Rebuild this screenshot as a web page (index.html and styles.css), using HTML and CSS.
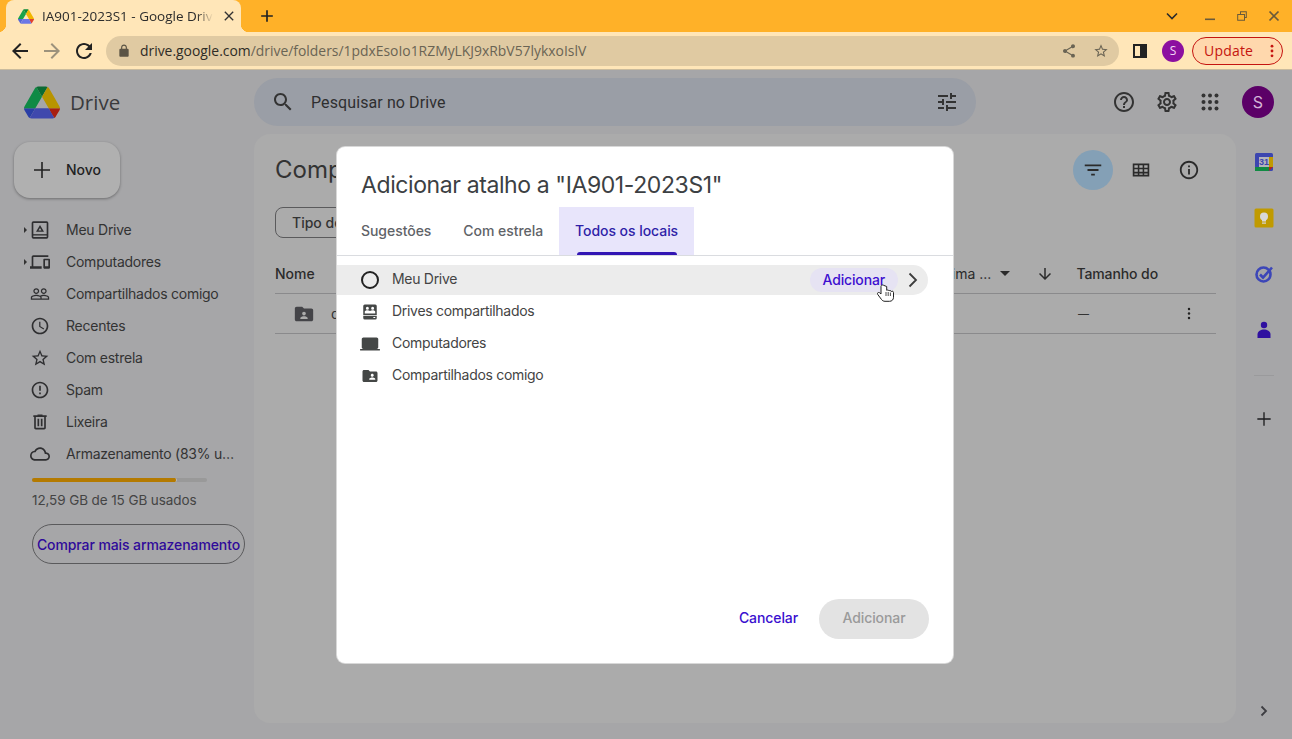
FILE: index.html
```html
<!DOCTYPE html>
<html lang="pt-BR">
<head>
  <meta charset="UTF-8">
  <title>IA901-2023S1 - Google Drive</title>
  <link rel="stylesheet" href="styles.css">
</head>
<body>
  <div class="chrome">
    <div class="tabstrip">
      <div class="tab">
        <svg class="favicon" viewBox="0 0 87.3 78"><path d="m6.6 66.85 3.85 6.65c.8 1.4 1.95 2.5 3.3 3.3l13.75-23.8h-27.5c0 1.55.4 3.1 1.2 4.5z" fill="#5566d8"/><path d="m43.65 25-13.75-23.8c-1.35.8-2.5 1.9-3.3 3.3l-25.4 44a9.06 9.06 0 0 0 -1.2 4.5h27.5z" fill="#1aa34a"/><path d="m73.55 76.8c1.35-.8 2.5-1.9 3.3-3.3l1.6-2.75 7.65-13.25c.8-1.4 1.2-2.95 1.2-4.5h-27.502l5.852 11.5z" fill="#e0402f"/><path d="m43.65 25 13.75-23.8c-1.35-.8-2.9-1.2-4.5-1.2h-18.5c-1.6 0-3.15.45-4.5 1.2z" fill="#0d8a38"/><path d="m59.8 53h-32.3l-13.75 23.8c1.35.8 2.9 1.2 4.5 1.2h50.8c1.6 0 3.15-.45 4.5-1.2z" fill="#6c78e6"/><path d="m73.4 26.5-12.7-22c-.8-1.4-1.95-2.5-3.3-3.3l-13.75 23.8 16.15 28h27.45c0-1.55-.4-3.1-1.2-4.5z" fill="#f2b600"/></svg>
        <span class="tab-title">IA901-2023S1 - Google Drive</span>
        <svg class="tab-close" viewBox="0 0 24 24"><path d="M19 6.41 17.59 5 12 10.59 6.41 5 5 6.41 10.59 12 5 17.59 6.41 19 12 13.41 17.59 19 19 17.59 13.41 12z"/></svg>
      </div>
      <svg class="new-tab" viewBox="0 0 24 24"><path d="M19 13h-6v6h-2v-6H5v-2h6V5h2v6h6v2z"/></svg>
      <div class="win-controls">
        <svg class="win-chevron" viewBox="0 0 12 8"><path d="M1 1.5 6 6.5 11 1.5" fill="none" stroke="#2b2b2b" stroke-width="1.6"/></svg>
        <svg class="win-btn" viewBox="0 0 12 12"><rect x="1" y="8.5" width="10" height="1.6" fill="#6a5a3a"/></svg>
        <svg class="win-btn" viewBox="0 0 12 12"><path d="M4 1.2h6.8V8H9V10.8H1.2V4H4zM5 2.2V4H9V7H9.8V2.2zM2.2 5V9.8H8V5z" fill="#6a5a3a"/></svg>
        <svg class="win-btn" viewBox="0 0 12 12"><path d="M1.5 1.5 10.5 10.5M10.5 1.5 1.5 10.5" stroke="#6a5a3a" stroke-width="1.7"/></svg>
      </div>
    </div>
    <div class="toolbar">
      <svg class="tool-icon" viewBox="0 0 24 24"><path d="M20 11H7.83l5.59-5.59L12 4l-8 8 8 8 1.41-1.41L7.83 13H20v-2z"/></svg>
      <svg class="tool-icon is-off" viewBox="0 0 24 24"><path d="M4 11h12.17l-5.59-5.59L12 4l8 8-8 8-1.41-1.41L16.17 13H4v-2z"/></svg>
      <svg class="tool-icon" viewBox="0 0 24 24"><path d="M17.65 6.35C16.2 4.9 14.21 4 12 4c-4.42 0-7.99 3.58-7.99 8s3.57 8 7.99 8c3.73 0 6.84-2.55 7.73-6h-2.08c-.82 2.33-3.04 4-5.65 4-3.31 0-6-2.69-6-6s2.69-6 6-6c1.66 0 3.14.69 4.22 1.78L13 11h7V4l-2.35 2.35z"/></svg>
      <div class="omnibox">
        <svg class="lock" viewBox="0 0 24 24"><path d="M18 8h-1V6c0-2.76-2.24-5-5-5S7 3.24 7 6v2H6c-1.1 0-2 .9-2 2v10c0 1.1.9 2 2 2h12c1.1 0 2-.9 2-2V10c0-1.1-.9-2-2-2zM9 6c0-1.66 1.34-3 3-3s3 1.34 3 3v2H9V6z"/></svg>
        <span class="url"><b>drive.google.com</b>/drive/folders/1pdxEsoIo1RZMyLKJ9xRbV57lykxoIslV</span>
        <svg class="omni-icon" viewBox="0 0 24 24"><path d="M18 16.08c-.76 0-1.44.3-1.96.77L8.91 12.7c.05-.23.09-.46.09-.7s-.04-.47-.09-.7l7.05-4.11c.54.5 1.25.81 2.04.81 1.66 0 3-1.34 3-3s-1.34-3-3-3-3 1.34-3 3c0 .24.04.47.09.7L8.04 9.81C7.5 9.31 6.79 9 6 9c-1.66 0-3 1.34-3 3s1.34 3 3 3c.79 0 1.5-.31 2.04-.81l7.12 4.16c-.05.21-.08.43-.08.65 0 1.61 1.31 2.92 2.92 2.92s2.92-1.31 2.92-2.92-1.31-2.92-2.92-2.92z"/></svg>
        <svg class="omni-icon" viewBox="0 0 24 24"><path d="M22 9.24l-7.19-.62L12 2 9.19 8.63 2 9.24l5.46 4.73L5.82 21 12 17.27 18.18 21l-1.63-7.03L22 9.24zM12 15.4l-3.76 2.27 1-4.28-3.32-2.88 4.38-.38L12 6.1l1.71 4.04 4.38.38-3.32 2.88 1 4.28L12 15.4z"/></svg>
      </div>
      <div class="side-panel"><span></span></div>
      <div class="profile">S</div>
      <div class="update">Update
        <svg class="update-dots" viewBox="0 0 4 16"><circle cx="2" cy="2.5" r="1.6"/><circle cx="2" cy="8" r="1.6"/><circle cx="2" cy="13.5" r="1.6"/></svg>
      </div>
    </div>
  </div>

  <div class="app">
    <header class="topbar">
      <div class="brand">
        <svg class="logo" viewBox="0 0 87.3 78"><path d="m6.6 66.85 3.85 6.65c.8 1.4 1.95 2.5 3.3 3.3l13.75-23.8h-27.5c0 1.55.4 3.1 1.2 4.5z" fill="#2b3fa6"/><path d="m43.65 25-13.75-23.8c-1.35.8-2.5 1.9-3.3 3.3l-25.4 44a9.06 9.06 0 0 0 -1.2 4.5h27.5z" fill="#0f8a45"/><path d="m73.55 76.8c1.35-.8 2.5-1.9 3.3-3.3l1.6-2.75 7.65-13.25c.8-1.4 1.2-2.95 1.2-4.5h-27.502l5.852 11.5z" fill="#a81f12"/><path d="m43.65 25 13.75-23.8c-1.35-.8-2.9-1.2-4.5-1.2h-18.5c-1.6 0-3.15.45-4.5 1.2z" fill="#0b6b33"/><path d="m59.8 53h-32.3l-13.75 23.8c1.35.8 2.9 1.2 4.5 1.2h50.8c1.6 0 3.15-.45 4.5-1.2z" fill="#3f48ad"/><path d="m73.4 26.5-12.7-22c-.8-1.4-1.95-2.5-3.3-3.3l-13.75 23.8 16.15 28h27.45c0-1.55-.4-3.1-1.2-4.5z" fill="#b89400"/></svg>
        <span class="brand-name">Drive</span>
      </div>
      <div class="search">
        <svg class="icon" viewBox="0 0 24 24"><path d="M15.5 14h-.79l-.28-.27C15.41 12.59 16 11.11 16 9.5 16 5.91 13.09 3 9.5 3S3 5.91 3 9.5 5.91 16 9.5 16c1.61 0 3.09-.59 4.23-1.57l.27.28v.79l5 4.99L20.49 19l-4.99-5zm-6 0C7.01 14 5 11.99 5 9.5S7.01 5 9.5 5 14 7.01 14 9.5 11.99 14 9.5 14z"/></svg>
        <span class="search-text">Pesquisar no Drive</span>
        <svg class="icon" viewBox="0 0 24 24"><path d="M3 17v2h6v-2H3zM3 5v2h10V5H3zm10 16v-2h8v-2h-8v-2h-2v6h2zM7 9v2H3v2h4v2h2V9H7zm14 4v-2H11v2h10zm-6-4h2V7h4V5h-4V3h-2v6z"/></svg>
      </div>
      <div class="top-actions">
        <svg class="icon" viewBox="0 0 24 24"><path d="M11 18h2v-2h-2v2zm1-16C6.48 2 2 6.48 2 12s4.48 10 10 10 10-4.48 10-10S17.52 2 12 2zm0 18c-4.41 0-8-3.59-8-8s3.59-8 8-8 8 3.59 8 8-3.59 8-8 8zm0-14c-2.21 0-4 1.79-4 4h2c0-1.1.9-2 2-2s2 .9 2 2c0 2-3 1.75-3 5h2c0-2.25 3-2.5 3-5 0-2.21-1.79-4-4-4z"/></svg>
        <svg class="icon" viewBox="0 0 24 24"><path d="M19.43 12.98c.04-.32.07-.64.07-.98 0-.34-.03-.66-.07-.98l2.11-1.65c.19-.15.24-.42.12-.64l-2-3.46c-.09-.16-.26-.25-.44-.25-.06 0-.12.01-.17.03l-2.49 1c-.52-.4-1.08-.73-1.69-.98l-.38-2.65C14.46 2.18 14.25 2 14 2h-4c-.25 0-.46.18-.49.42l-.38 2.65c-.61.25-1.17.59-1.69.98l-2.49-1c-.06-.02-.12-.03-.18-.03-.17 0-.34.09-.43.25l-2 3.46c-.13.22-.07.49.12.64l2.11 1.65c-.04.32-.07.65-.07.98 0 .33.03.66.07.98l-2.11 1.65c-.19.15-.24.42-.12.64l2 3.46c.09.16.26.25.44.25.06 0 .12-.01.17-.03l2.49-1c.52.4 1.08.73 1.69.98l.38 2.65c.03.24.24.42.49.42h4c.25 0 .46-.18.49-.42l.38-2.65c.61-.25 1.17-.59 1.69-.98l2.49 1c.06.02.12.03.18.03.17 0 .34-.09.43-.25l2-3.46c.12-.22.07-.49-.12-.64l-2.11-1.65zm-1.98-1.71c.04.31.05.52.05.73 0 .21-.02.43-.05.73l-.14 1.13.89.7 1.08.84-.7 1.21-1.27-.51-1.04-.42-.9.68c-.43.32-.84.56-1.25.73l-1.06.43-.16 1.13-.2 1.35h-1.4l-.19-1.35-.16-1.13-1.06-.43c-.43-.18-.83-.41-1.23-.71l-.91-.7-1.06.43-1.27.51-.7-1.21 1.08-.84.89-.7-.14-1.13c-.03-.31-.05-.54-.05-.74s.02-.43.05-.73l.14-1.13-.89-.7-1.08-.84.7-1.21 1.27.51 1.04.42.9-.68c.43-.32.84-.56 1.25-.73l1.06-.43.16-1.13.2-1.35h1.39l.19 1.35.16 1.13 1.06.43c.43.18.83.41 1.23.71l.91.7 1.06-.43 1.27-.51.7 1.21-1.07.85-.89.7.14 1.13zM12 8c-2.21 0-4 1.79-4 4s1.79 4 4 4 4-1.79 4-4-1.79-4-4-4zm0 6c-1.1 0-2-.9-2-2s.9-2 2-2 2 .9 2 2-.9 2-2 2z"/></svg>
        <svg class="icon" viewBox="0 0 24 24"><circle cx="5.5" cy="5.5" r="2"/><circle cx="12" cy="5.5" r="2"/><circle cx="18.5" cy="5.5" r="2"/><circle cx="5.5" cy="12" r="2"/><circle cx="12" cy="12" r="2"/><circle cx="18.5" cy="12" r="2"/><circle cx="5.5" cy="18.5" r="2"/><circle cx="12" cy="18.5" r="2"/><circle cx="18.5" cy="18.5" r="2"/></svg>
        <div class="avatar">S</div>
      </div>
    </header>

    <div class="workspace">
      <nav class="sidebar">
        <button class="new-btn">
          <svg class="new-plus" viewBox="0 0 24 24"><path d="M20 12.8h-7.2V20h-1.6v-7.2H4v-1.600h7.2V4h1.600v7.200H20z"/></svg>
          Novo
        </button>
        <ul class="nav">
          <li class="nav-item has-caret">
            <svg class="nav-icon" viewBox="0 0 24 24"><rect x="3" y="2.500" width="18" height="19" rx="1" fill="none" stroke="currentColor" stroke-width="2"/><path d="M3 17.800h18" stroke="currentColor" stroke-width="1.600"/><path d="M12 6l4.800 8H7.200zM12 9.500l-1.800 3h3.600z" fill-rule="evenodd"/></svg>
            Meu Drive
          </li>
          <li class="nav-item has-caret">
            <svg class="nav-icon" viewBox="0 0 24 24"><path d="M4 6h18V4H4c-1.100 0-2 .9-2 2v11H0v3h14v-3H4V6zm19 2h-6c-.55 0-1 .45-1 1v10c0 .55.45 1 1 1h6c.55 0 1-.45 1-1V9c0-.55-.45-1-1-1zm-1 9h-4v-7h4v7z"/></svg>
            Computadores
          </li>
          <li class="nav-item">
            <svg class="nav-icon" viewBox="0 0 24 24"><path d="M16.500 13c-1.200 0-3.070.34-4.500 1-1.430-.67-3.300-1-4.500-1C5.330 13 1 14.080 1 16.250V19h22v-2.750c0-2.170-4.330-3.250-6.500-3.250zm-4 4.500h-10v-1.250c0-.54 2.560-1.750 5-1.750s5 1.210 5 1.750v1.250zm9 0H14v-1.250c0-.46-.2-.86-.52-1.220.88-.3 1.960-.53 3.020-.53 2.440 0 5 1.210 5 1.750v1.250zM7.500 12c1.930 0 3.500-1.570 3.500-3.500S9.430 5 7.500 5 4 6.570 4 8.500 5.570 12 7.500 12zm0-5.500c1.100 0 2 .9 2 2s-.9 2-2 2-2-.9-2-2 .9-2 2-2zm9 5.500c1.930 0 3.500-1.570 3.500-3.500S18.430 5 16.500 5 13 6.570 13 8.500s1.570 3.500 3.500 3.500zm0-5.500c1.100 0 2 .9 2 2s-.9 2-2 2-2-.9-2-2 .9-2 2-2z"/></svg>
            Compartilhados comigo
          </li>
          <li class="nav-item">
            <svg class="nav-icon" viewBox="0 0 24 24"><path d="M11.990 2C6.470 2 2 6.480 2 12s4.470 10 9.990 10C17.520 22 22 17.520 22 12S17.520 2 11.990 2zM12 20c-4.420 0-8-3.580-8-8s3.580-8 8-8 8 3.580 8 8-3.580 8-8 8zm.5-13H11v6l5.250 3.150.75-1.230-4.500-2.670z"/></svg>
            Recentes
          </li>
          <li class="nav-item">
            <svg class="nav-icon" viewBox="0 0 24 24"><path d="M22 9.240l-7.190-.62L12 2 9.190 8.630 2 9.240l5.460 4.730L5.820 21 12 17.270 18.180 21l-1.630-7.030L22 9.240zM12 15.400l-3.760 2.270 1-4.280-3.320-2.880 4.380-.38L12 6.100l1.710 4.040 4.380.38-3.320 2.880 1 4.280L12 15.400z"/></svg>
            Com estrela
          </li>
          <li class="nav-item">
            <svg class="nav-icon" viewBox="0 0 24 24"><path d="M11 15h2v2h-2zm0-8h2v6h-2zm.99-5C6.470 2 2 6.480 2 12s4.470 10 9.990 10C17.520 22 22 17.520 22 12S17.520 2 11.990 2zM12 20c-4.420 0-8-3.580-8-8s3.580-8 8-8 8 3.580 8 8-3.580 8-8 8z"/></svg>
            Spam
          </li>
          <li class="nav-item">
            <svg class="nav-icon" viewBox="0 0 24 24"><path d="M15 4V3H9v1H4v2h1v13c0 1.100.9 2 2 2h10c1.100 0 2-.9 2-2V6h1V4h-5zm2 15H7V6h10v13zM9 8h2v9H9zm4 0h2v9h-2z"/></svg>
            Lixeira
          </li>
          <li class="nav-item">
            <svg class="nav-icon" viewBox="0 0 24 24"><path d="M19.350 10.040C18.670 6.590 15.640 4 12 4 9.110 4 6.600 5.640 5.350 8.040 2.340 8.360 0 10.910 0 14c0 3.310 2.690 6 6 6h13c2.760 0 5-2.240 5-5 0-2.640-2.050-4.780-4.650-4.960zM19 18H6c-2.210 0-4-1.790-4-4 0-2.050 1.530-3.760 3.560-3.970l1.070-.11.5-.95C8.080 7.140 9.940 6 12 6c2.620 0 4.880 1.860 5.390 4.430l.3 1.500 1.530.11c1.560.1 2.780 1.410 2.780 2.960 0 1.650-1.350 3-3 3z"/></svg>
            <span class="nav-trunc">Armazenamento (83% usado)</span>
          </li>
        </ul>
        <div class="storage">
          <div class="storage-bar"><div class="storage-fill" style="width: 83%"></div></div>
          <div class="storage-text">12,59 GB de 15 GB usados</div>
          <div class="buy-btn">Comprar mais armazenamento</div>
        </div>
      </nav>

      <main class="main">
        <div class="main-head">
          <h1 class="main-title">Compartilhados comigo</h1>
          <div class="view-actions">
            <span class="view-btn is-active"><svg class="icon-sm" viewBox="0 0 24 24"><path d="M10 18h4v-2h-4v2zM3 6v2h18V6H3zm3 7h12v-2H6v2z"/></svg></span>
            <span class="view-btn"><svg class="icon-sm" viewBox="0 0 24 24"><path d="M3 5h18v14H3zM4.800 6.800v2.800h3.700V6.800zm5.400 0v2.800h3.600V6.800zm5.300 0v2.800h3.700V6.800zM4.800 11.300v2.700h3.700v-2.700zm5.400 0v2.700h3.600v-2.700zm5.300 0v2.700h3.700v-2.700zM4.800 15.700v1.500h3.700v-1.500zm5.400 0v1.500h3.600v-1.500zm5.300 0v1.500h3.700v-1.500z" fill-rule="evenodd"/></svg></span>
            <span class="view-btn"><svg class="icon-sm" viewBox="0 0 24 24"><path d="M11 7h2v2h-2zm0 4h2v6h-2zm1-9C6.480 2 2 6.480 2 12s4.480 10 10 10 10-4.480 10-10S17.520 2 12 2zm0 18c-4.410 0-8-3.590-8-8s3.590-8 8-8 8 3.590 8 8-3.590 8-8 8z"/></svg></span>
          </div>
        </div>
        <div class="chips"><span class="chip">Tipo de item</span></div>
        <div class="list-head">
          <span class="col-name">Nome</span>
          <span class="col-date">Data da última ...</span>
          <svg class="head-caret" viewBox="0 0 10 5"><path d="M0 0h10L5 5z"/></svg>
          <svg class="head-arrow" viewBox="0 0 24 24"><path d="M20 12l-1.410-1.410L13 16.170V4h-2v12.170l-5.580-5.590L4 12l8 8 8-8z"/></svg>
          <span class="col-size">Tamanho do</span>
        </div>
        <div class="list-row">
          <svg class="row-folder" viewBox="0 0 24 24"><path d="M20 6h-8l-2-2H4c-1.100 0-1.990.9-1.990 2L2 18c0 1.100.9 2 2 2h16c1.100 0 2-.9 2-2V8c0-1.100-.9-2-2-2zm-8 3.500c1.100 0 2 .9 2 2s-.9 2-2 2-2-.9-2-2 .9-2 2-2zm4 8H8v-1c0-1.330 2.670-2 4-2s4 .67 4 2v1z"/></svg>
          <span class="row-name">dados</span>
          <span class="row-size">—</span>
          <svg class="row-more" viewBox="0 0 4 16"><circle cx="2" cy="2.500" r="1.500"/><circle cx="2" cy="8" r="1.500"/><circle cx="2" cy="13.500" r="1.500"/></svg>
        </div>
      </main>

      <aside class="rail">
        <svg class="rail-icon" viewBox="0 0 20 20"><rect x="1" y="1" width="18" height="18" rx="1.500" fill="#3c46b0"/><rect x="1" y="15" width="14" height="4" fill="#118a43"/><rect x="15" y="5" width="4" height="10" fill="#c09a00"/><path d="M15 15h4l-4 4z" fill="#b3231a"/><rect x="5" y="5" width="10" height="10" fill="#b4b4bc"/><text class="cal-day" x="10" y="13.400" text-anchor="middle">31</text></svg>
        <svg class="rail-icon" viewBox="0 0 20 20"><rect x="0.500" y="0.500" width="19" height="19" rx="1.500" fill="#c09a00"/><circle cx="10" cy="8.500" r="4" fill="#d8d8d8"/><rect x="8" y="11" width="4" height="2.500" fill="#d8d8d8"/><rect x="8" y="14.500" width="4" height="1.200" fill="#d8d8d8"/></svg>
        <svg class="rail-icon" viewBox="0 0 20 20"><circle cx="9.500" cy="10.500" r="7" fill="none" stroke="#3c46b8" stroke-width="2.600"/><path d="M6 10.500l3 3 9-10" fill="none" stroke="#3c46b8" stroke-width="2.600"/></svg>
        <svg class="rail-icon" viewBox="0 0 20 20"><circle cx="10" cy="5" r="3.200" fill="#2f10a0"/><path d="M3.500 18v-3.500C3.500 11 7 9.500 10 9.500s6.500 1.500 6.500 5V18z" fill="#2f10a0"/></svg>
        <div class="rail-divider"></div>
        <svg class="rail-plus" viewBox="0 0 24 24"><path d="M20 12.800h-7.200V20h-1.600v-7.200H4v-1.600h7.200V4h1.600v7.200H20z"/></svg>
        <svg class="rail-expand" viewBox="0 0 8 12"><path d="M1.500 1.500 6 6 1.500 10.500" fill="none" stroke="#3d3d42" stroke-width="1.800"/></svg>
      </aside>
    </div>
  </div>

  <div class="dialog">
    <h2 class="dialog-title">Adicionar atalho a "IA901-2023S1"</h2>
    <div class="dialog-tabs">
      <span class="dialog-tab">Sugestões</span>
      <span class="dialog-tab">Com estrela</span>
      <span class="dialog-tab is-selected">Todos os locais</span>
    </div>
    <div class="places">
      <div class="place is-hover">
        <span class="radio"></span>
        <span class="place-name">Meu Drive</span>
        <span class="place-add">Adicionar</span>
        <svg class="place-next" viewBox="0 0 10 16"><path d="M1.500 1.500 8 8 1.500 14.500" fill="none" stroke="#3c3c3c" stroke-width="1.800"/></svg>
      </div>
      <div class="place">
        <svg class="place-icon" viewBox="0 0 24 24"><path d="M5 2h14a2 2 0 0 1 2 2v12H3V4a2 2 0 0 1 2-2zm3.500 3a2 2 0 1 0 0 4 2 2 0 0 0 0-4zm7 0a2 2 0 1 0 0 4 2 2 0 0 0 0-4zM5 14h14v-2.500c0-1-2-1.800-3.500-1.800-1.300 0-2.700.4-3.500 1-.8-.6-2.200-1-3.500-1-1.500 0-3.500.8-3.500 1.800z" fill-rule="evenodd"/><path d="M3 17h18v3a2 2 0 0 1-2 2H5a2 2 0 0 1-2-2zm13.500 1.500V20h2.500v-1.500z" fill-rule="evenodd"/></svg>
        <span class="place-name">Drives compartilhados</span>
      </div>
      <div class="place">
        <svg class="place-icon is-wide" viewBox="0 0 24 24"><path d="M20 18c1.100 0 1.990-.9 1.990-2L22 6c0-1.100-.9-2-2-2H4c-1.100 0-2 .9-2 2v10c0 1.100.9 2 2 2H0v2h24v-2h-4z"/></svg>
        <span class="place-name">Computadores</span>
      </div>
      <div class="place">
        <svg class="place-icon" viewBox="0 0 24 24"><path d="M20 6h-8l-2-2H4c-1.100 0-1.990.9-1.990 2L2 18c0 1.100.9 2 2 2h16c1.100 0 2-.9 2-2V8c0-1.100-.9-2-2-2zm-5 3c1.100 0 2 .9 2 2s-.9 2-2 2-2-.9-2-2 .9-2 2-2zm4 8h-8v-1c0-1.330 2.670-2 4-2s4 .67 4 2v1z"/></svg>
        <span class="place-name">Compartilhados comigo</span>
      </div>
    </div>
    <div class="dialog-foot">
      <span class="cancel">Cancelar</span>
      <span class="confirm">Adicionar</span>
    </div>
  </div>

  <svg class="cursor-hand" viewBox="0 0 18 18"><path d="M5.500 1c-.9 0-1.500.6-1.500 1.500V10L2.800 8.900c-.8-.7-2-.5-2.300.3-.2.5 0 1 .4 1.500L4.500 15.500c.8 1 1.800 1.800 3.500 1.800h4.500c2.500 0 4-1.700 4-4V8.500c0-.8-.6-1.300-1.300-1.300-.4 0-.7.1-.9.3-.2-.7-.8-1-1.300-1-.4 0-.8.1-1 .4-.2-.6-.7-.9-1.300-.9-.4 0-.7.1-1 .3V2.500C7 1.600 6.400 1 5.500 1z" fill="#fff" stroke="#222" stroke-width="1"/><path d="M9 8v4M11.200 8v4M13.400 8.500V12" stroke="#222" stroke-width=".8" fill="none"/></svg>
</body>
</html>
```

FILE: styles.css
```css
* { box-sizing: border-box; }
html, body { height: 100%; }
body { margin: 0; width: 1292px; height: 739px; overflow: hidden; position: relative; font-family: Inter, Roboto, sans-serif; font-size: 14px; color: #333; background: #a6a6a8; }
svg { display: block; flex: none; fill: currentColor; }

/* browser frame */
.chrome { height: 70px; background: #ffe6b8; border-bottom: 1px solid #c9bb9e; font-family: "Open Sans", "Noto Sans", sans-serif; }
.tabstrip { height: 32px; background: #ffb128; display: flex; align-items: center; padding-left: 6px; }
.tab { width: 235px; height: 32px; background: #ffe6b8; border-radius: 8px 8px 0 0; display: flex; align-items: center; padding: 0 4px 0 12px; gap: 8px; position: relative; }
.tab::before, .tab::after { content: ""; position: absolute; bottom: 0; width: 8px; height: 8px; }
.tab::before { left: -8px; background: radial-gradient(circle at 0 0, #ffb128 8px, #ffe6b8 8.500px); }
.tab::after { right: -8px; background: radial-gradient(circle at 100% 0, #ffb128 8px, #ffe6b8 8.500px); }
.favicon { width: 16px; height: 15px; }
.tab-title { flex: 1; overflow: hidden; white-space: nowrap; font-size: 13.500px; color: #2b2b2b; -webkit-mask-image: linear-gradient(to left, transparent 0, #000 16px); mask-image: linear-gradient(to left, transparent 0, #000 16px); }
.tab-close { width: 16px; height: 16px; color: #333; }
.new-tab { width: 20px; height: 20px; margin-left: 16px; color: #222; }
.win-controls { margin-left: auto; display: flex; align-items: center; padding-right: 12px; gap: 20px; }
.win-chevron { width: 12px; height: 8px; margin-right: 6px; }
.win-btn { width: 12px; height: 12px; }

.toolbar { height: 37px; display: flex; align-items: center; padding-left: 8px; }
.tool-icon { width: 24px; height: 24px; color: #222; margin-right: 8px; }
.tool-icon.is-off { color: #9c927c; }
.omnibox { width: 1013px; height: 30px; margin-left: 2px; background: #e0caa2; border-radius: 15px; display: flex; align-items: center; padding: 0 10px 0 11px; }
.lock { width: 14px; height: 14px; color: #5b5445; }
.url { flex: 1; margin-left: 9px; font-size: 13.900px; color: #6a6454; white-space: nowrap; }
.url b { font-weight: 400; color: #2e2c26; }
.omni-icon { width: 16px; height: 16px; color: #6a6454; margin-left: 16px; }
.side-panel { width: 14px; height: 14px; margin-left: 14px; border: 2px solid #222; display: flex; justify-content: flex-end; }
.side-panel span { width: 5px; background: #222; }
.profile { width: 22px; height: 22px; margin-left: 15px; background: #8c0fa0; color: #f3d9f7; border-radius: 50%; font-size: 12px; display: flex; align-items: center; justify-content: center; }
.update { width: 91px; height: 28px; margin-left: 8px; border: 1px solid #c5140f; border-radius: 14px; background: #ffd8ad; color: #c5140f; font-size: 14px; letter-spacing: .2px; display: flex; align-items: center; justify-content: space-between; padding: 0 8px 0 11px; }
.update-dots { width: 4px; height: 14px; }

/* drive page, already dimmed by the dialog scrim */
.app { height: 669px; display: flex; flex-direction: column; }
.topbar { height: 64px; display: flex; align-items: center; padding: 0 18px 0 24px; flex: none; }
.brand { width: 230px; display: flex; align-items: center; gap: 10px; }
.logo { width: 36px; height: 33px; }
.brand-name { font-size: 20.500px; color: #3a3a3c; font-family: "Open Sans", sans-serif; }
.search { width: 722px; height: 48px; background: #9a9ea6; border-radius: 24px; display: flex; align-items: center; padding: 0 17px; }
.icon { width: 24px; height: 24px; color: #333; }
.search-text { flex: 1; margin-left: 16px; font-size: 16px; letter-spacing: .1px; color: #2f2f30; font-family: Roboto, sans-serif; }
.top-actions { margin-left: auto; display: flex; align-items: center; gap: 19px; }
.avatar { width: 32px; height: 32px; margin-left: 1px; border-radius: 50%; background: #5b0067; color: #d4b4d8; font-size: 16px; display: flex; align-items: center; justify-content: center; }

.workspace { flex: 1; display: flex; min-height: 0; }
.sidebar { width: 254px; flex: none; padding: 8px 0 0 14px; }
.new-btn { width: 106px; height: 56px; border: 0; border-radius: 16px; background: #b0b0b0; box-shadow: 0 1px 3px rgba(0,0,0,.35); font: 500 14px Inter, Roboto, sans-serif; color: #222; display: flex; align-items: center; padding: 0 0 2px 16px; gap: 12px; }
.new-plus { width: 24px; height: 24px; margin-top: 2px; }
.nav { list-style: none; margin: 16px 0 0; padding: 0; }
.nav-item { height: 32px; width: 222px; display: flex; align-items: center; padding: 0 0 2px 16px; gap: 16px; color: #333; position: relative; white-space: nowrap; font-size: 14px; letter-spacing: -.25px; }
.nav-icon { width: 20px; height: 20px; margin-top: 2px; color: #2f2f31; }
.has-caret::before { content: ""; position: absolute; left: 10px; top: 13px; border-left: 3px solid #333; border-top: 3px solid transparent; border-bottom: 3px solid transparent; }
.nav-trunc { width: 172px; overflow: hidden; text-overflow: ellipsis; }
.storage { padding: 8px 0 0 18px; }
.storage-bar { width: 175px; height: 4px; border-radius: 2px; background: #999; }
.storage-fill { height: 4px; border-radius: 2px; background: #b47a00; border-right: 1px solid #bbb; }
.storage-text { margin-top: 10px; font-size: 13.500px; color: #444; letter-spacing: -.1px; }
.buy-btn { width: 213px; height: 40px; margin-top: 16px; border: 1px solid #5a5a5c; border-radius: 20px; display: flex; align-items: center; justify-content: center; color: #2f0a9a; font-weight: 500; font-size: 14px; white-space: nowrap; letter-spacing: -.1px; }

.main { width: 982px; flex: none; height: 589px; background: #ababab; border-radius: 16px; padding: 0 20px 0 21px; overflow: hidden; }
.main-head { height: 72px; display: flex; align-items: center; justify-content: space-between; }
.main-title { margin: 0 0 2px; font-size: 24px; font-weight: 400; color: #333; white-space: nowrap; }
.view-actions { display: flex; align-items: center; gap: 8px; margin-right: 7px; }
.view-btn { width: 40px; height: 40px; border-radius: 50%; display: flex; align-items: center; justify-content: center; color: #2b2b2b; }
.view-btn.is-active { background: #84a0b6; }
.icon-sm { width: 22px; height: 22px; }
.chips { height: 31px; margin-top: 1px; }
.chip { display: inline-block; height: 31px; line-height: 29px; padding: 0 16px; border: 1px solid #5a5a5c; border-radius: 8px; font-weight: 500; color: #333; }
.list-head { height: 40px; margin-top: 16px; display: flex; align-items: center; border-bottom: 1px solid #8a8a8c; font-weight: 500; color: #2b2b2b; padding-right: 58px; }
.col-name { flex: 1; }
.col-date { white-space: nowrap; font-weight: 400; }
.head-caret { width: 10px; height: 5px; margin-left: 9px; }
.head-arrow { width: 18px; height: 18px; margin-left: 26px; }
.col-size { margin-left: 22px; white-space: nowrap; letter-spacing: -.1px; }
.list-row { height: 40px; display: flex; align-items: center; border-bottom: 1px solid #8a8a8c; position: relative; }
.row-folder { width: 22px; height: 22px; margin-left: 18px; color: #444448; }
.row-name { margin-left: 16px; }
.row-size { position: absolute; left: 803px; color: #333; font-size: 11px; }
.row-more { position: absolute; right: 25px; top: 13px; width: 4px; height: 13px; color: #222; }

.rail { flex: 1; display: flex; flex-direction: column; align-items: center; padding-top: 18px; position: relative; }
.rail-icon { width: 20px; height: 20px; margin-bottom: 36px; }
.cal-day { font: 700 9px "Liberation Sans", sans-serif; fill: #3c46b0; }
.rail-divider { width: 20px; height: 1px; background: #9a9a9c; margin-top: -1px; }
.rail-plus { width: 20px; height: 20px; margin-top: 33px; color: #1d1d1f; }
.rail-expand { position: absolute; left: 24px; top: 571px; width: 8px; height: 12px; }

/* dialog */
.dialog { position: absolute; left: 337px; top: 147px; width: 616px; height: 516px; background: #fff; border-radius: 8px; box-shadow: 0 0 0 1px #d8d8d8; display: flex; flex-direction: column; }
.dialog-title { margin: 0; padding: 24px 24px 0; height: 60px; font-size: 23px; font-weight: 400; color: #3c4043; white-space: nowrap; letter-spacing: -.4px; }
.dialog-tabs { height: 49px; display: flex; border-bottom: 1px solid #dadce0; padding-left: 8px; flex: none; }
.dialog-tab { height: 48px; padding: 0 16px 2px; display: flex; align-items: center; color: #5f6368; font-weight: 500; font-size: 14px; letter-spacing: -.05px; }
.dialog-tab.is-selected { background: #e8e5fb; color: #2f1fa8; position: relative; }
.dialog-tab.is-selected::after { content: ""; position: absolute; left: 18px; right: 17px; bottom: 0; height: 3px; background: #3215b4; border-radius: 3px 3px 0 0; }
.places { padding-top: 9px; flex: 1; }
.place { width: 591px; height: 30px; margin-bottom: 2px; display: flex; align-items: center; padding-left: 24px; color: #444; font-size: 14px; }
.place.is-hover { background: #ececec; border-radius: 0 15px 15px 0; }
.radio { width: 18px; height: 18px; border: 2px solid #222; border-radius: 50%; flex: none; }
.place-icon { width: 18px; height: 18px; color: #444746; }
.place-icon.is-wide { transform: scale(1.100); }
.place-name { margin-left: 13px; padding-bottom: 4px; letter-spacing: -.3px; }
.place-add { margin-left: auto; height: 24px; padding: 0 13px 2px; border-radius: 12px; background: #e6e3f3; color: #3d0fd0; font-weight: 500; letter-spacing: -.15px; display: flex; align-items: center; }
.place-next { width: 10px; height: 16px; margin: 0 10px 0 10px; }
.dialog-foot { height: 64px; padding: 0 24px 24px 0; display: flex; align-items: center; justify-content: flex-end; flex: none; }
.cancel { color: #3a0fcf; font-weight: 500; margin-right: 21px; padding-bottom: 4px; letter-spacing: -.1px; }
.confirm { width: 110px; height: 40px; padding-bottom: 4px; border-radius: 20px; background: #e3e3e3; color: #9a9a9a; font-weight: 500; display: flex; align-items: center; justify-content: center; letter-spacing: -.1px; }
.cursor-hand { position: absolute; left: 877px; top: 284px; width: 18px; height: 18px; }
```
